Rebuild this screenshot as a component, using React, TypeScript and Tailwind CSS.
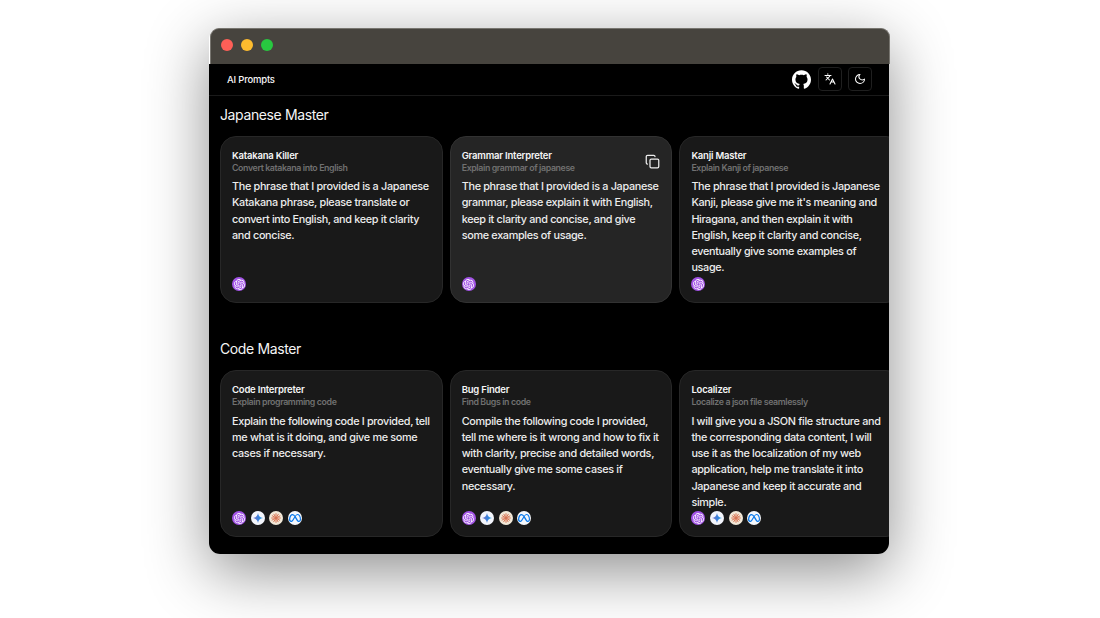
import { Copy } from "lucide-react";
import { SiGithub, SiMeta, SiOpenai } from "react-icons/si";

type Model = "openai" | "gemini" | "claude" | "meta";

interface Prompt {
  title: string;
  subtitle: string;
  lines: string[];
  models: Model[];
  active?: boolean;
}

const allModels: Model[] = ["openai", "gemini", "claude", "meta"];

const sections: { heading: string; prompts: Prompt[] }[] = [
  {
    heading: "Japanese Master",
    prompts: [
      {
        title: "Katakana Killer",
        subtitle: "Convert katakana into English",
        lines: [
          "The phrase that I provided is a Japanese",
          "Katakana phrase, please translate or",
          "convert into English, and keep it clarity",
          "and concise.",
        ],
        models: ["openai"],
      },
      {
        title: "Grammar Interpreter",
        subtitle: "Explain grammar of japanese",
        lines: [
          "The phrase that I provided is a Japanese",
          "grammar, please explain it with English,",
          "keep it clarity and concise, and give",
          "some examples of usage.",
        ],
        models: ["openai"],
        active: true,
      },
      {
        title: "Kanji Master",
        subtitle: "Explain Kanji of japanese",
        lines: [
          "The phrase that I provided is Japanese",
          "Kanji, please give me it's meaning and",
          "Hiragana, and then explain it with",
          "English, keep it clarity and concise,",
          "eventually give some examples of",
          "usage.",
        ],
        models: ["openai"],
      },
    ],
  },
  {
    heading: "Code Master",
    prompts: [
      {
        title: "Code Interpreter",
        subtitle: "Explain programming code",
        lines: [
          "Explain the following code I provided, tell",
          "me what is it doing, and give me some",
          "cases if necessary.",
        ],
        models: allModels,
      },
      {
        title: "Bug Finder",
        subtitle: "Find Bugs in code",
        lines: [
          "Compile the following code I provided,",
          "tell me where is it wrong and how to fix it",
          "with clarity, precise and detailed words,",
          "eventually give me some cases if",
          "necessary.",
        ],
        models: allModels,
      },
      {
        title: "Localizer",
        subtitle: "Localize a json file seamlessly",
        lines: [
          "I will give you a JSON file structure and",
          "the corresponding data content, I will",
          "use it as the localization of my web",
          "application, help me translate it into",
          "Japanese and keep it accurate and",
          "simple.",
        ],
        models: allModels,
      },
    ],
  },
];

const badge = "flex size-[14px] items-center justify-center rounded-full";

function ModelBadge({ model }: { model: Model }) {
  if (model === "openai") {
    return (
      <span className={`${badge} bg-[#a354e6]`}>
        <SiOpenai className="size-[11px] text-white" />
      </span>
    );
  }
  if (model === "gemini") {
    return (
      <span className={`${badge} bg-[#f3f5fc]`}>
        <svg viewBox="0 0 24 24" className="size-[10px]">
          <defs>
            <linearGradient id="gem" x1="0" y1="0" x2="1" y2="0">
              <stop offset="0" stopColor="#7a6fc4" />
              <stop offset="0.5" stopColor="#3f7fd9" />
              <stop offset="1" stopColor="#1ba1e3" />
            </linearGradient>
          </defs>
          <path fill="url(#gem)" d="M12 0C13 7 17 11 24 12C17 13 13 17 12 24C11 17 7 13 0 12C7 11 11 7 12 0Z" />
        </svg>
      </span>
    );
  }
  if (model === "claude") {
    return (
      <span className={`${badge} bg-[#f2e9d9]`}>
        <svg viewBox="0 0 24 24" className="size-[10px]" stroke="#d97757" strokeWidth="2.4" strokeLinecap="round">
          <path d="M12 12V1.5M12 12L17.5 3M12 12L21.5 7M12 12H22.5M12 12L21 17.5M12 12L17 21M12 12V22.5M12 12L6.5 21M12 12L2.5 17M12 12H1.5M12 12L3 6.5M12 12L7 3" />
        </svg>
      </span>
    );
  }
  return (
    <span className={`${badge} bg-[#f4f7fc]`}>
      <SiMeta className="size-[12px] text-[#0a78ea]" />
    </span>
  );
}

function TranslateIcon() {
  return (
    <svg
      viewBox="0 0 24 24"
      className="size-[12px] text-white"
      fill="none"
      stroke="currentColor"
      strokeWidth="2.1"
      strokeLinecap="round"
      strokeLinejoin="round"
    >
      <path d="m5 8 6 6M4 14l6-6 2-3M2 5h12M7 2h1M22 22l-5-10-5 10M14 18h6" />
    </svg>
  );
}

function MoonIcon() {
  return (
    <svg
      viewBox="0 0 24 24"
      className="size-[12px] text-white"
      fill="none"
      stroke="currentColor"
      strokeWidth="2.1"
      strokeLinecap="round"
      strokeLinejoin="round"
    >
      <path d="M12 3a6 6 0 0 0 9 9 9 9 0 1 1-9-9Z" />
    </svg>
  );
}

function PromptCard({ prompt }: { prompt: Prompt }) {
  return (
    <article
      className={`relative flex h-[167px] w-[222.7px] shrink-0 flex-col rounded-[16px] border pt-[12px] pr-2 pb-[11px] pl-[11px] ${
        prompt.active ? "border-[#323232] bg-[#252525]" : "border-[#272727] bg-[#191919]"
      }`}
    >
      <h3 className="text-[9.5px] leading-[13px] font-semibold tracking-[-0.2px] text-[#f5f5f5]">{prompt.title}</h3>
      <p className="text-[8.8px] leading-[12px] font-semibold tracking-[-0.38px] text-[#707070]">{prompt.subtitle}</p>
      <p className="mt-[5.2px] flex-1 text-[10.83px] leading-[16.25px] font-medium tracking-[-0.32px] whitespace-pre text-[#ededed]">
        {prompt.lines.join("\n")}
      </p>
      <div className="flex shrink-0 gap-[4.6px]">
        {prompt.models.map((model) => (
          <ModelBadge key={model} model={model} />
        ))}
      </div>
      {prompt.active && <Copy className="absolute top-[16.5px] right-[11px] size-[15px] text-[#ededed]" strokeWidth={2} />}
    </article>
  );
}

export default function App() {
  return (
    <div className="h-[618px] w-[1100px] overflow-hidden bg-white pt-7 pl-[209px] font-['Inter','Liberation_Sans',sans-serif]">
      <div className="flex h-[526px] w-[680px] flex-col rounded-[11px] shadow-[0_17px_62px_rgba(0,0,0,0.45)]">
        <div className="ml-px flex h-[35.5px] w-[680px] shrink-0 items-center gap-2 rounded-t-[9px] border border-b-0 border-[#77756f] bg-[#47443e] pb-[2px] pl-[10px]">
          <span className="size-3 rounded-full bg-[#ff5f57]" />
          <span className="size-3 rounded-full bg-[#febc2e]" />
          <span className="size-3 rounded-full bg-[#28c840]" />
        </div>
        <div className="flex min-h-0 flex-1 flex-col overflow-hidden rounded-b-[11px] bg-black">
          <header className="flex h-[32.5px] shrink-0 items-center justify-between border-b border-[#1a1a1a] pr-[17px] pl-[18px]">
            <span className="pt-[2px] text-[9.5px] font-medium tracking-[-0.2px] text-[#f5f5f5]">AI Prompts</span>
            <div className="flex items-center">
              <SiGithub className="size-[19px] text-white" />
              <span className="ml-[7px] flex size-6 items-center justify-center rounded-[4px] border border-[#1f1f1f] pr-px">
                <TranslateIcon />
              </span>
              <span className="ml-1.5 flex size-6 items-center justify-center rounded-[4px] border border-[#1f1f1f] pr-px">
                <MoonIcon />
              </span>
            </div>
          </header>
          <main className="flex flex-col gap-[27.4px] pl-[11px]">
            {sections.map((section) => (
              <section key={section.heading} className="h-[207px] shrink-0 pt-[9px]">
                <h2 className="text-[14px] leading-5 tracking-[-0.38px] text-[#f5f5f5]">{section.heading}</h2>
                <div className="mt-[11px] flex gap-[7px]">
                  {section.prompts.map((prompt) => (
                    <PromptCard key={prompt.title} prompt={prompt} />
                  ))}
                </div>
              </section>
            ))}
          </main>
        </div>
      </div>
    </div>
  );
}
